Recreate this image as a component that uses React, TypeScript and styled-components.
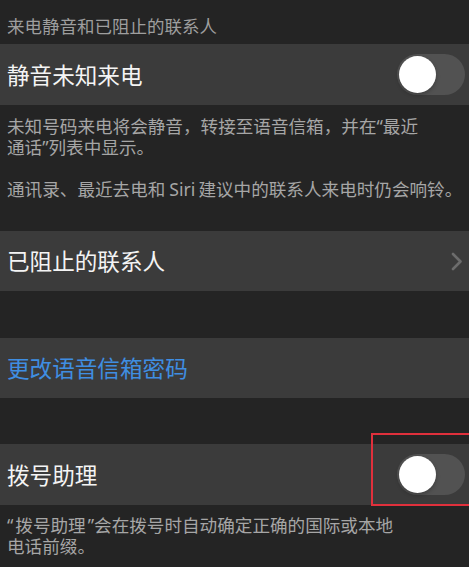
import React from "react";
import styled, { createGlobalStyle } from "styled-components";

const Global = createGlobalStyle`
  html, body {
    margin: 0;
    padding: 0;
    background: #242424;
  }
  body {
    font-family: "Noto Sans CJK SC", "Noto Sans", sans-serif;
    -webkit-font-smoothing: antialiased;
  }
`;

const Page = styled.div`
  width: 469px;
  height: 567px;
  overflow: hidden;
  background: #242424;
  display: flex;
  flex-direction: column;
`;

const SectionHeader = styled.div`
  height: 44px;
  box-sizing: border-box;
  padding: 15px 0 0 7px;
  font-size: 17.5px;
  line-height: 22px;
  color: #9e9e9e;
  white-space: nowrap;
`;

const Row = styled.div<{ $h?: number }>`
  position: relative;
  height: ${(p) => p.$h ?? 61}px;
  flex: none;
  box-sizing: border-box;
  background: #3b3b3b;
  padding: 0 4px 0 7px;
  display: flex;
  align-items: center;
  justify-content: space-between;
`;

const RowLabel = styled.span<{ $blue?: boolean }>`
  font-size: 22.6px;
  line-height: 30px;
  color: ${(p) => (p.$blue ? "#3f8ee2" : "#f4f4f4")};
  white-space: nowrap;
`;

const Footer = styled.div<{ $top: number; $bottom: number }>`
  padding: ${(p) => p.$top}px 0 ${(p) => p.$bottom}px 7px;
  font-family: "Noto Sans", "Noto Sans CJK SC", sans-serif;
  font-size: 17.6px;
  line-height: 21px;
  color: #a6a6a6;
  white-space: nowrap;
  display: flex;
  flex-direction: column;
  gap: 21px;
`;

const Para = styled.div``;

const Latin = styled.span`
  margin: 0 3px 0 4px;
`;

const Quoted = styled.span`
  margin: 0 2px;
`;

const Spacer = styled.div<{ $h: number }>`
  height: ${(p) => p.$h}px;
  flex: none;
`;

const Track = styled.div`
  position: relative;
  width: 68px;
  height: 41px;
  border-radius: 21px;
  background: #525252;
  flex: none;
`;

const Knob = styled.div`
  position: absolute;
  left: 2px;
  top: 2px;
  width: 37px;
  height: 37px;
  border-radius: 50%;
  background: #ffffff;
  box-shadow: 0 2px 4px rgba(0, 0, 0, 0.25);
`;

const Chevron = styled.svg`
  width: 12px;
  height: 19px;
  margin-right: 2px;
  flex: none;
`;

const Highlight = styled.div`
  position: absolute;
  left: 371px;
  top: -11px;
  right: -10px;
  bottom: -1px;
  border: 2px solid #e0303c;
  pointer-events: none;
`;

const Toggle = () => (
  <Track>
    <Knob />
  </Track>
);

export default function App() {
  return (
    <Page>
      <Global />
      <SectionHeader>来电静音和已阻止的联系人</SectionHeader>
      <Row>
        <RowLabel>静音未知来电</RowLabel>
        <Toggle />
      </Row>
      <Footer $top={11} $bottom={31}>
        <Para>
          未知号码来电将会静音，转接至语音信箱，并在“最近
          <br />
          通话”列表中显示。
        </Para>
        <Para>
          通讯录、最近去电和<Latin>Siri</Latin>建议中的联系人来电时仍会响铃。
        </Para>
      </Footer>
      <Row $h={60}>
        <RowLabel>已阻止的联系人</RowLabel>
        <Chevron viewBox="0 0 12 19">
          <path
            d="M2 2 L9.5 9.5 L2 17"
            fill="none"
            stroke="#6c6c6c"
            strokeWidth="2.6"
            strokeLinecap="round"
            strokeLinejoin="round"
          />
        </Chevron>
      </Row>
      <Spacer $h={47} />
      <Row $h={60}>
        <RowLabel $blue>更改语音信箱密码</RowLabel>
      </Row>
      <Spacer $h={46} />
      <Row>
        <RowLabel>拨号助理</RowLabel>
        <Toggle />
        <Highlight />
      </Row>
      <Footer $top={10} $bottom={10}>
        <Para>
          “<Quoted>拨号助理</Quoted>”会在拨号时自动确定正确的国际或本地
          <br />
          电话前缀。
        </Para>
      </Footer>
    </Page>
  );
}
